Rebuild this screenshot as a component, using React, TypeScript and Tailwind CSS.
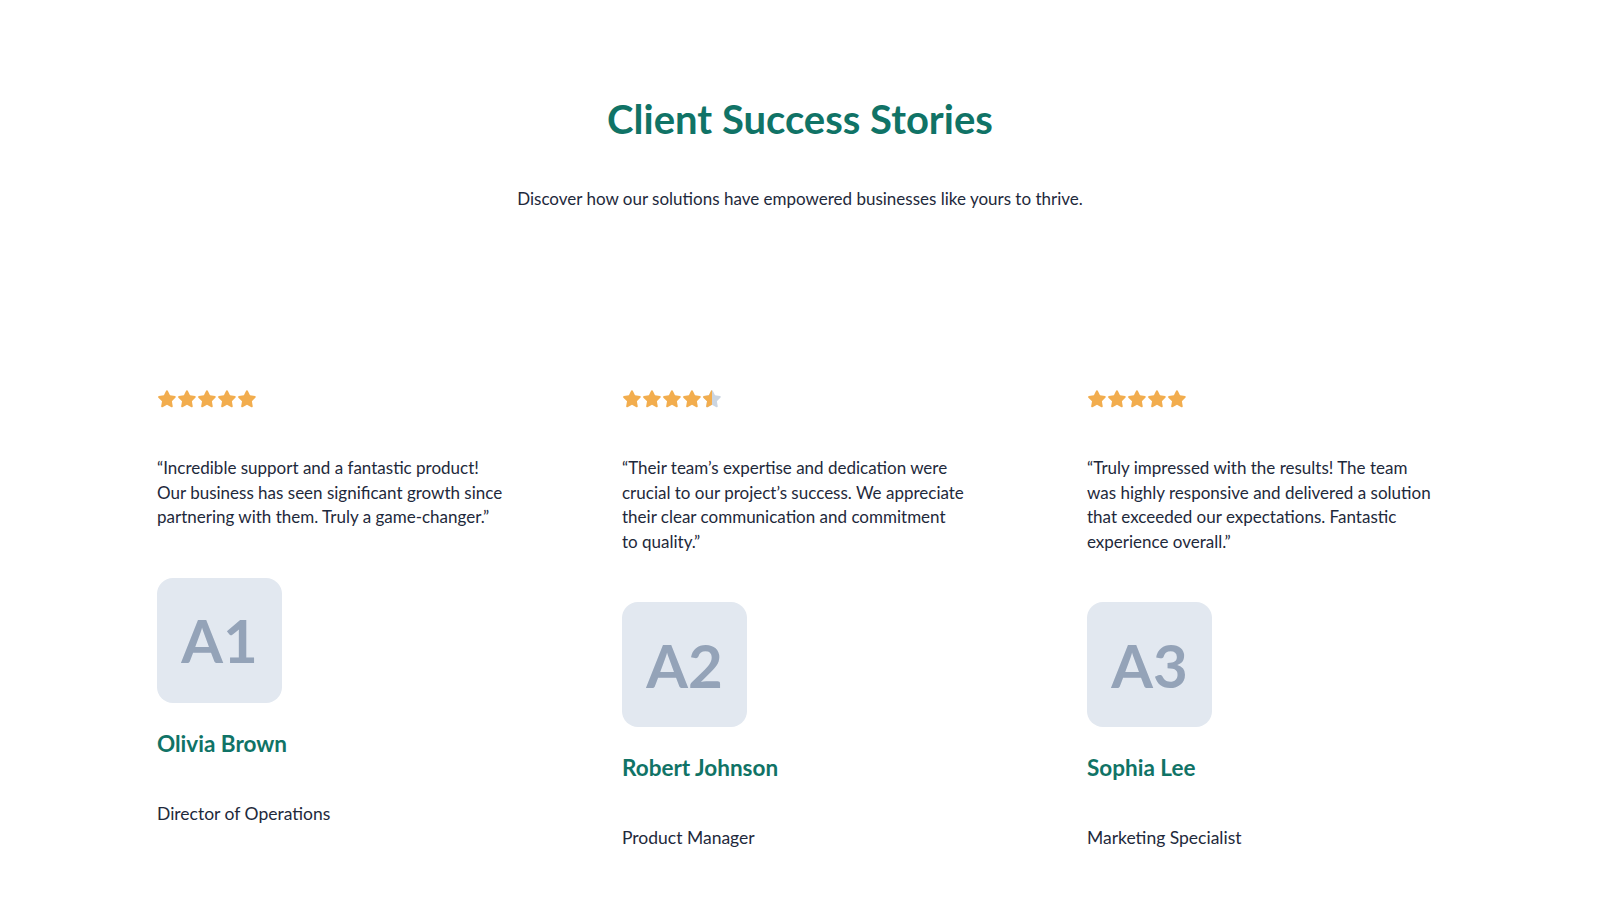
import React from "react";

const STAR_PATH =
  "M10 1.2c.35 0 .66.2.8.52l2.2 4.6 5.02.7c.35.05.64.3.75.64.1.34.01.71-.25.95l-3.64 3.55.86 5.01c.06.35-.08.7-.37.91-.28.2-.66.23-.97.07L10 15.8l-4.5 2.37c-.31.16-.69.13-.97-.07-.29-.21-.43-.56-.37-.91l.86-5.01L1.38 8.63c-.26-.24-.35-.61-.25-.95.11-.34.4-.59.75-.64l5.02-.7 2.2-4.6c.14-.32.45-.52.8-.52z";

function Star({ fill }: { fill: "full" | "half" }) {
  const id = React.useId();
  return (
    <svg width="20" height="20" viewBox="0 0 20 20" className="block">
      {fill === "half" ? (
        <>
          <defs>
            <clipPath id={id}>
              <rect x="0" y="0" width="10" height="20" />
            </clipPath>
          </defs>
          <path d={STAR_PATH} fill="#cbd5e1" />
          <path d={STAR_PATH} fill="#f2ad4e" clipPath={`url(#${id})`} />
        </>
      ) : (
        <path d={STAR_PATH} fill="#f2ad4e" />
      )}
    </svg>
  );
}

const items = [
  {
    rating: 5,
    quote: [
      "\u201cIncredible support and a fantastic product!",
      "Our business has seen significant growth since",
      "partnering with them. Truly a game-changer.\u201d",
    ],
    avatar: "A1",
    name: "Olivia Brown",
    role: "Director of Operations",
  },
  {
    rating: 4.5,
    quote: [
      "\u201cTheir team\u2019s expertise and dedication were",
      "crucial to our project\u2019s success. We appreciate",
      "their clear communication and commitment",
      "to quality.\u201d",
    ],
    avatar: "A2",
    name: "Robert Johnson",
    role: "Product Manager",
  },
  {
    rating: 5,
    quote: [
      "\u201cTruly impressed with the results! The team",
      "was highly responsive and delivered a solution",
      "that exceeded our expectations. Fantastic",
      "experience overall.\u201d",
    ],
    avatar: "A3",
    name: "Sophia Lee",
    role: "Marketing Specialist",
  },
];

export default function App() {
  return (
    <div
      className="min-h-[900px] w-full bg-white pt-[95px] pb-[40px] text-[#1e293b]"
      style={{ fontFamily: '"Lato", "Noto Sans", sans-serif' }}
    >
      <h2 className="text-center text-[40px] leading-[48px] font-bold text-[#107366]">
        Client Success Stories
      </h2>
      <p className="mt-[44px] text-center text-[17px] leading-[24px] text-[#1e293b]">
        Discover how our solutions have empowered businesses like yours to thrive.
      </p>
      <div className="mx-auto mt-[178px] grid w-[1286px] grid-cols-[356px_356px_356px] gap-x-[109px]">
        {items.map((it) => (
          <div key={it.name} className="flex flex-col items-start">
            <div className="flex h-[20px] items-center">
              {[0, 1, 2, 3, 4].map((i) => (
                <Star key={i} fill={i + 1 <= it.rating ? "full" : "half"} />
              ))}
            </div>
            <p className="mt-[47px] text-[17px] leading-[24.5px] text-[#1e293b]">
              {it.quote.map((line, i) => (
                <span key={i} className="block whitespace-nowrap">
                  {line}
                </span>
              ))}
            </p>
            <div className="mt-[48px] flex h-[125px] w-[125px] items-center justify-center rounded-2xl bg-[#e2e8f0]">
              <span
                className="text-[60px] leading-none font-bold text-[#94a3b8]"
                style={{ fontFamily: '"Lato", sans-serif' }}
              >
                {it.avatar}
              </span>
            </div>
            <h3 className="mt-[26px] text-[22.5px] leading-[30px] font-bold text-[#107366]">
              {it.name}
            </h3>
            <p className="mt-[43px] text-[17.5px] leading-[24px] text-[#1e293b]">{it.role}</p>
          </div>
        ))}
      </div>
    </div>
  );
}
